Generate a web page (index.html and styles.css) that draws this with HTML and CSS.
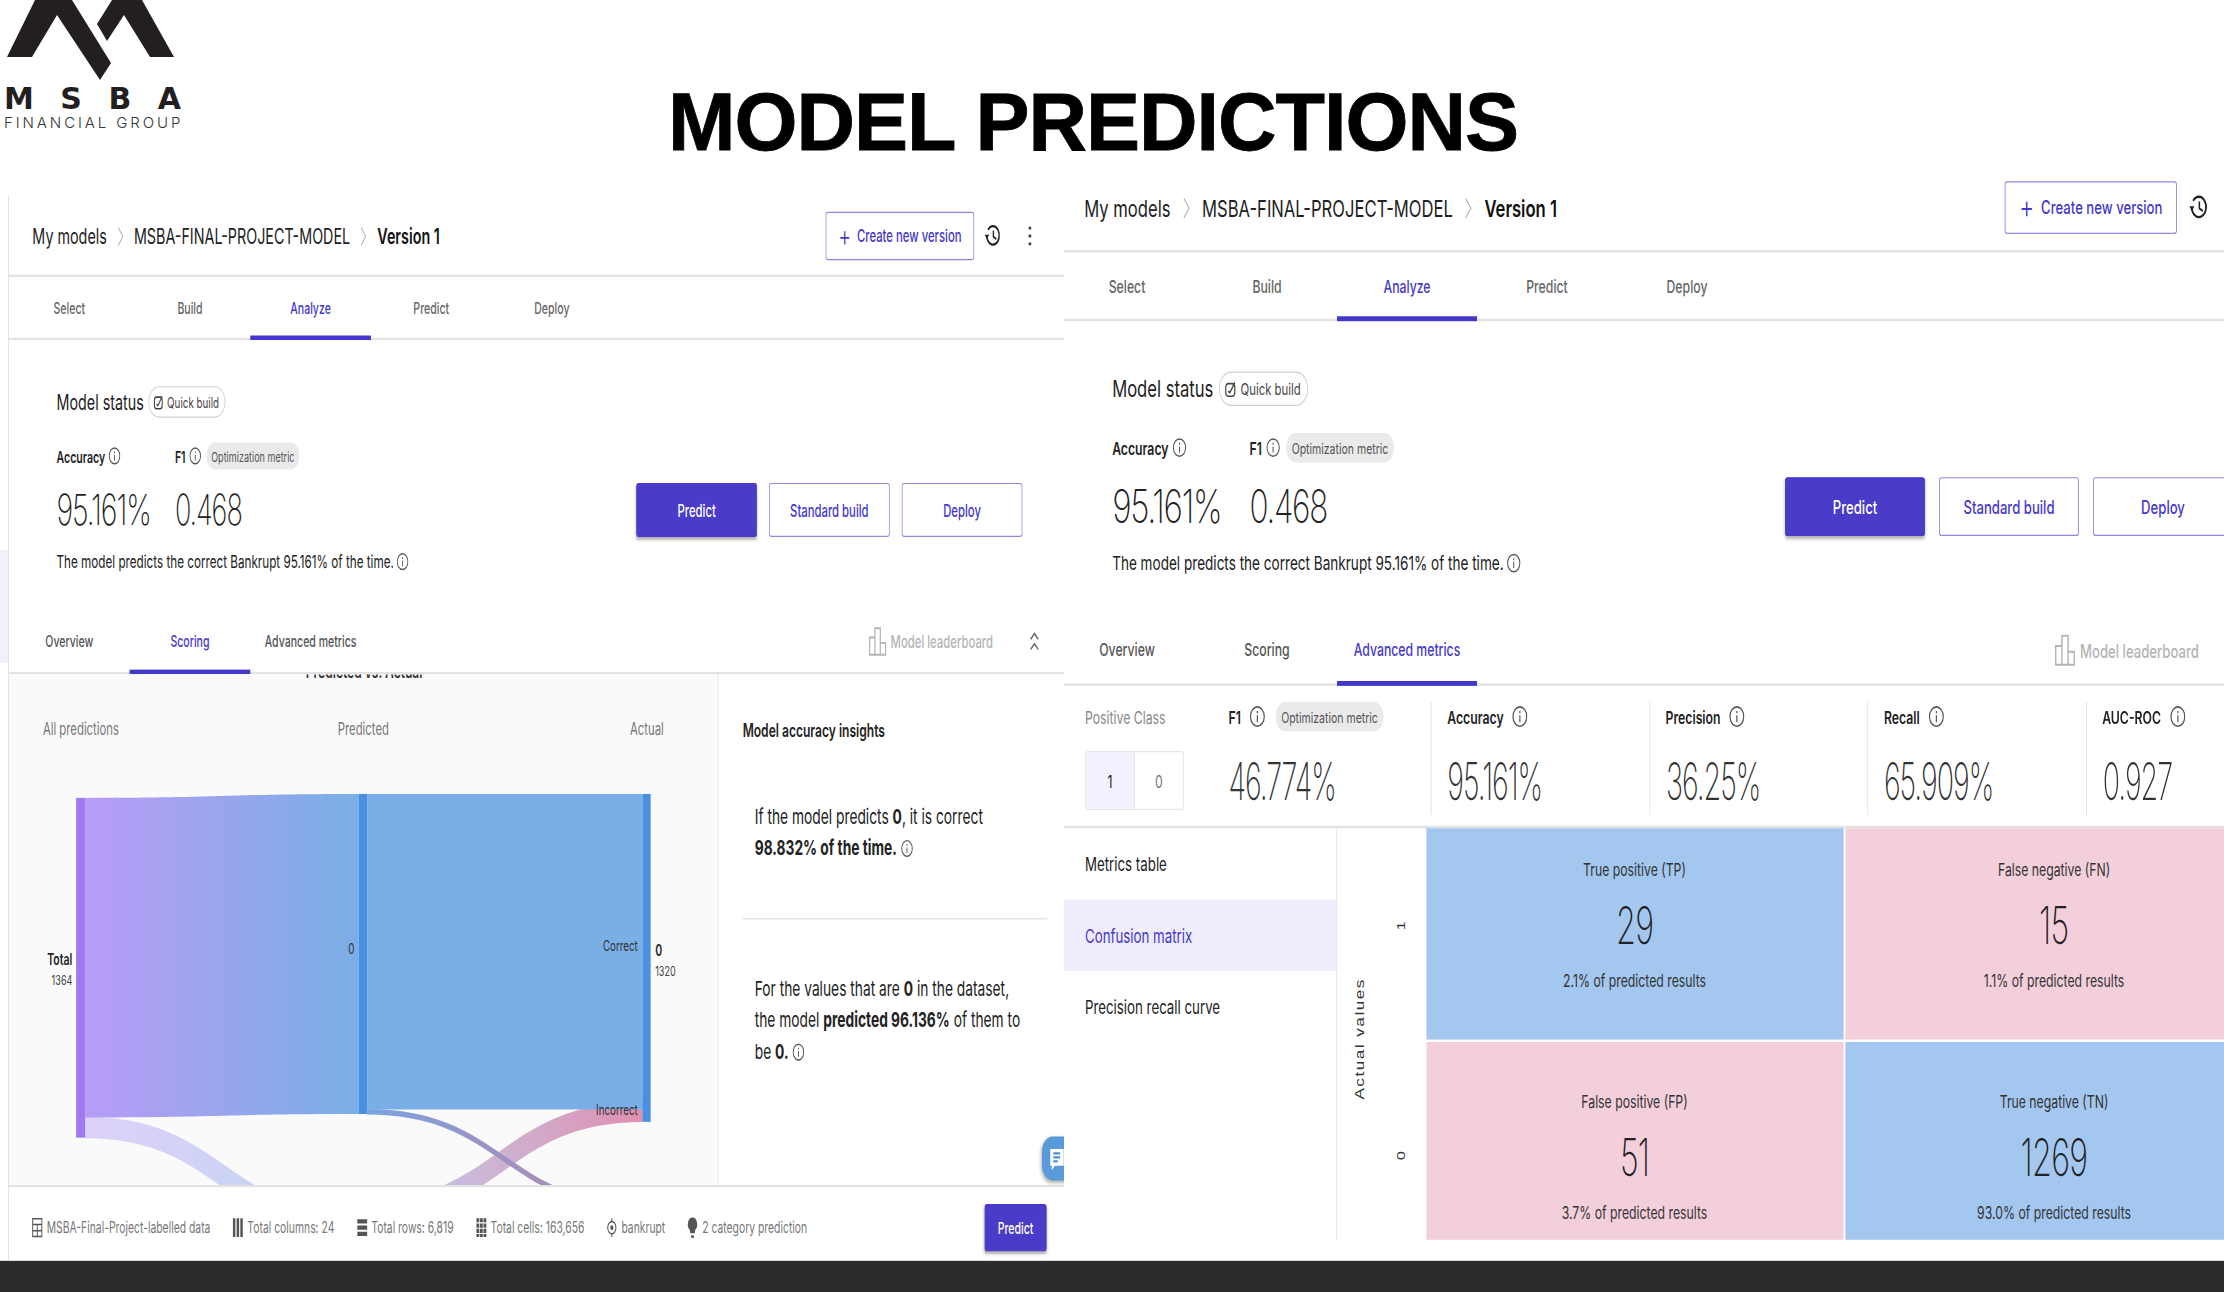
FILE: index.html
```html
<!DOCTYPE html>
<html lang="en">
<head>
<meta charset="utf-8">
<title>Model predictions</title>
<link rel="stylesheet" href="styles.css">
</head>
<body>
<svg class="sprite" aria-hidden="true">
  <symbol id="i-info" viewBox="0 0 16 16"><circle cx="8" cy="8" r="7" fill="none" stroke="currentColor" stroke-width="1.2"/><path d="M8 7v5M8 4v1.6" fill="none" stroke="currentColor" stroke-width="1.2"/></symbol>
  <symbol id="i-history" viewBox="0 0 20 20"><path d="M4 5.500A7.500 7.500 0 1 1 2.600 11" fill="none" stroke="currentColor" stroke-width="1.8"/><path d="M0 9.500h5.400L2.700 13z" fill="currentColor"/><path d="M10.500 6v5l3.500 2" fill="none" stroke="currentColor" stroke-width="1.6"/></symbol>
  <symbol id="i-quick" viewBox="0 0 16 16"><rect x="2" y="3" width="11" height="11" rx="3" fill="none" stroke="currentColor" stroke-width="1.5"/><path d="M5 9.500l2 1.500 6-9" fill="none" stroke="currentColor" stroke-width="1.5"/></symbol>
  <symbol id="i-board" viewBox="0 0 20 22"><path d="M1 8h6v13H1zM7 1h6v20H7zM13 12h6v9h-6z" fill="none" stroke="currentColor" stroke-width="1.4"/></symbol>
  <symbol id="i-chevup" viewBox="0 0 16 20"><path d="M3 8l5-5 5 5M3 17l5-5 5 5" fill="none" stroke="currentColor" stroke-width="1.6"/></symbol>
  <symbol id="i-sep" viewBox="0 0 10 20"><path d="M2 2l6 8-6 8" fill="none" stroke="currentColor" stroke-width="1.2"/></symbol>
  <symbol id="i-table" viewBox="0 0 16 20"><path d="M1.500 1.500h13v17h-13zM1.500 7h13M1.500 13h13M8 7v11.500" fill="none" stroke="currentColor" stroke-width="1.4"/></symbol>
  <symbol id="i-cols" viewBox="0 0 16 20"><path d="M1 1h3.500v18H1zM6.300 1h3.500v18H6.300zM11.500 1H15v18h-3.500z" fill="currentColor"/></symbol>
  <symbol id="i-rows" viewBox="0 0 16 20"><path d="M1 2h14v4H1zM1 8h14v4H1zM1 14h14v4H1z" fill="currentColor"/></symbol>
  <symbol id="i-cells" viewBox="0 0 16 20"><path d="M1 1h4v4H1zM6 1h4v4H6zM11 1h4v4h-4zM1 6h4v4H1zM6 6h4v4H6zM11 6h4v4h-4zM1 11h4v4H1zM6 11h4v4H6zM11 11h4v4h-4zM1 16h4v3H1zM6 16h4v3H6zM11 16h4v3h-4z" fill="currentColor"/></symbol>
  <symbol id="i-target" viewBox="0 0 18 20"><circle cx="9" cy="10" r="6.500" fill="none" stroke="currentColor" stroke-width="1.600"/><circle cx="9" cy="10" r="2.500" fill="currentColor"/><path d="M9 0v4M9 16v4" stroke="currentColor" stroke-width="1.600"/></symbol>
  <symbol id="i-bulb" viewBox="0 0 14 20"><path d="M7 1a6 6 0 0 0-3.500 11l.5 3h6l.5-3A6 6 0 0 0 7 1z" fill="currentColor"/><path d="M5 17h4v2H5z" fill="currentColor"/></symbol>
</svg>

<div class="page">
  <header class="top">
    <div class="logo">
      <svg class="logo-mark" viewBox="0 0 184 84" aria-hidden="true">
        <polygon points="7,57 35,0 72,0 111,63 100,80 57,15 32,57"/>
        <polygon points="97,24 112,0 142,0 174,57 150,57 124,15 107,41"/>
      </svg>
      <div class="logo-name">MSBA</div>
      <div class="logo-sub">FINANCIAL GROUP</div>
    </div>
    <h1 class="title">MODEL PREDICTIONS</h1>
  </header>

  <main class="panels">
    <div class="gutter"><div class="gutter-mark"></div></div>

    <section class="panel panel-left">
      <div class="canvas">
        <div class="crumbs">
          <span>My models</span><svg class="sep"><use href="#i-sep"/></svg>
          <span>MSBA-FINAL-PROJECT-MODEL</span><svg class="sep"><use href="#i-sep"/></svg>
          <strong>Version 1</strong>
          <div class="crumb-actions">
            <button class="btn-create"><span class="plus">+</span>Create new version</button>
            <svg class="ic-history"><use href="#i-history"/></svg>
            <div class="dots"><i></i><i></i><i></i></div>
          </div>
        </div>
        <nav class="tabs">
          <a class="tab">Select</a><a class="tab">Build</a><a class="tab active">Analyze</a><a class="tab">Predict</a><a class="tab">Deploy</a>
        </nav>
        <div class="status">
          <div class="status-main">
            <div class="status-head"><span class="status-title">Model status</span><span class="chip-build"><svg class="ic-quick"><use href="#i-quick"/></svg>Quick build</span></div>
            <div class="kpi-row">
              <div class="kpi kpi-acc"><div class="kpi-label">Accuracy <svg class="info"><use href="#i-info"/></svg></div><div class="kpi-val"><span>95.161%</span></div></div>
              <div class="kpi"><div class="kpi-label">F1 <svg class="info"><use href="#i-info"/></svg><span class="chip-opt">Optimization metric</span></div><div class="kpi-val"><span>0.468</span></div></div>
            </div>
            <p class="sentence">The model predicts the correct Bankrupt 95.161% of the time. <svg class="info"><use href="#i-info"/></svg></p>
          </div>
          <div class="status-btns">
            <button class="btn btn-primary">Predict</button><button class="btn">Standard build</button><button class="btn">Deploy</button>
          </div>
        </div>
        <nav class="tabs subtabs">
          <a class="tab">Overview</a><a class="tab active">Scoring</a><a class="tab">Advanced metrics</a>
          <span class="board"><svg class="ic-board"><use href="#i-board"/></svg>Model leaderboard</span>
          <svg class="ic-chev"><use href="#i-chevup"/></svg>
        </nav>
        <div class="scoring">
          <div class="chart">
            <svg class="sankey" viewBox="0 2 940 453.500" width="940" height="453.500" role="img" aria-label="Predicted vs. Actual">
              <defs>
                <linearGradient id="g1" x1="0" x2="1" y1="0" y2="0"><stop offset="0" stop-color="#b89cf6"/><stop offset="1" stop-color="#7aaee6"/></linearGradient>
                <linearGradient id="g3" gradientUnits="userSpaceOnUse" x1="101" x2="464" y1="0" y2="0"><stop offset="0" stop-color="#ddd2f8"/><stop offset="1" stop-color="#bfd4f2"/></linearGradient>
                <linearGradient id="g4" gradientUnits="userSpaceOnUse" x1="475" x2="840" y1="0" y2="0"><stop offset="0" stop-color="#7aa3de"/><stop offset="1" stop-color="#c47fa8"/></linearGradient>
                <linearGradient id="g5" gradientUnits="userSpaceOnUse" x1="464" x2="840" y1="0" y2="0"><stop offset="0" stop-color="#bcd4f2"/><stop offset="1" stop-color="#e08fb0"/></linearGradient>
              </defs>
              <text class="sk-title" x="471" y="5" text-anchor="middle">Predicted vs. Actual</text>
              <text class="sk-col" x="45" y="56">All predictions</text>
              <text class="sk-col" x="470" y="56" text-anchor="middle">Predicted</text>
              <text class="sk-col" x="846" y="56" text-anchor="middle">Actual</text>
              <path d="M101 405C283 405 283 490 464 490" fill="none" stroke="url(#g3)" stroke-width="19"/>
              <path d="M464 480C652 480 652 391 840 391" fill="none" stroke="url(#g5)" stroke-width="18"/>
              <path d="M475 391C657 391 657 475 840 475" fill="none" stroke="url(#g4)" stroke-width="5"/>
              <path d="M101 112C283 112 283 108.500 464 108.500V393C283 393 283 396 101 396z" fill="url(#g1)"/>
              <rect x="475" y="108.500" width="365" height="280.500" fill="#7aaee6"/>
              <rect x="89" y="112" width="12" height="302" fill="#a078f0"/>
              <rect x="464" y="108.500" width="11" height="284.500" fill="#4a90e0"/>
              <rect x="840" y="108.500" width="11" height="291.500" fill="#4a90e0"/>
              <text class="sk-b" x="84" y="261" text-anchor="end">Total</text>
              <text class="sk-s" x="84" y="278" text-anchor="end">1364</text>
              <text class="sk-m" x="458" y="251" text-anchor="end">0</text>
              <text class="sk-m" x="834" y="248" text-anchor="end">Correct</text>
              <text class="sk-m" x="834" y="394" text-anchor="end">Incorrect</text>
              <text class="sk-b" x="857" y="253">0</text>
              <text class="sk-s" x="857" y="270">1320</text>
            </svg>
          </div>
          <aside class="insights">
            <h3 class="ins-title">Model accuracy insights</h3>
            <p class="ins-a">If the model predicts <b>0</b>, it is correct<br><b>98.832% of the time.</b> <svg class="info"><use href="#i-info"/></svg></p>
            <p class="ins-b">For the values that are <b>0</b> in the dataset,<br>the model <b>predicted 96.136%</b> of them to<br>be <b>0.</b> <svg class="info"><use href="#i-info"/></svg></p>
            <div class="chat"><svg viewBox="0 0 20 22" class="ic-chat"><path d="M2 2h18v15H8l-4 4v-4H2z" fill="#fff"/><path d="M6 6h9M6 9.500h9M6 13h6" stroke="#4a90d8" stroke-width="2"/></svg></div>
          </aside>
        </div>
        <footer class="foot">
          <span class="fi"><svg class="fic"><use href="#i-table"/></svg>MSBA-Final-Project-labelled data</span>
          <span class="fi"><svg class="fic"><use href="#i-cols"/></svg>Total columns: 24</span>
          <span class="fi"><svg class="fic"><use href="#i-rows"/></svg>Total rows: 6,819</span>
          <span class="fi"><svg class="fic"><use href="#i-cells"/></svg>Total cells: 163,656</span>
          <span class="fi"><svg class="fic"><use href="#i-target"/></svg>bankrupt</span>
          <span class="fi"><svg class="fic"><use href="#i-bulb"/></svg>2 category prediction</span>
          <button class="btn btn-primary btn-foot">Predict</button>
        </footer>
      </div>
    </section>

    <section class="panel panel-right">
      <div class="canvas">
        <div class="crumbs">
          <span>My models</span><svg class="sep"><use href="#i-sep"/></svg>
          <span>MSBA-FINAL-PROJECT-MODEL</span><svg class="sep"><use href="#i-sep"/></svg>
          <strong>Version 1</strong>
          <div class="crumb-actions">
            <button class="btn-create"><span class="plus">+</span>Create new version</button>
            <svg class="ic-history"><use href="#i-history"/></svg>
            <div class="dots"><i></i><i></i><i></i></div>
          </div>
        </div>
        <nav class="tabs">
          <a class="tab">Select</a><a class="tab">Build</a><a class="tab active">Analyze</a><a class="tab">Predict</a><a class="tab">Deploy</a>
        </nav>
        <div class="status">
          <div class="status-main">
            <div class="status-head"><span class="status-title">Model status</span><span class="chip-build"><svg class="ic-quick"><use href="#i-quick"/></svg>Quick build</span></div>
            <div class="kpi-row">
              <div class="kpi kpi-acc"><div class="kpi-label">Accuracy <svg class="info"><use href="#i-info"/></svg></div><div class="kpi-val"><span>95.161%</span></div></div>
              <div class="kpi"><div class="kpi-label">F1 <svg class="info"><use href="#i-info"/></svg><span class="chip-opt">Optimization metric</span></div><div class="kpi-val"><span>0.468</span></div></div>
            </div>
            <p class="sentence">The model predicts the correct Bankrupt 95.161% of the time. <svg class="info"><use href="#i-info"/></svg></p>
          </div>
          <div class="status-btns">
            <button class="btn btn-primary">Predict</button><button class="btn">Standard build</button><button class="btn">Deploy</button>
          </div>
        </div>
        <nav class="tabs subtabs">
          <a class="tab">Overview</a><a class="tab">Scoring</a><a class="tab active">Advanced metrics</a>
          <span class="board"><svg class="ic-board"><use href="#i-board"/></svg>Model leaderboard</span>
          <svg class="ic-chev"><use href="#i-chevup"/></svg>
        </nav>
        <div class="metrics">
          <div class="pos">
            <div class="pos-label">Positive Class</div>
            <div class="toggle"><span class="tg on">1</span><span class="tg">0</span></div>
          </div>
          <div class="mcol mcol-first"><div class="kpi-label m-label">F1 <svg class="info"><use href="#i-info"/></svg><span class="chip-opt">Optimization metric</span></div><div class="m-val"><span>46.774%</span></div></div>
          <div class="mcol"><div class="kpi-label m-label">Accuracy <svg class="info"><use href="#i-info"/></svg></div><div class="m-val"><span>95.161%</span></div></div>
          <div class="mcol"><div class="kpi-label m-label">Precision <svg class="info"><use href="#i-info"/></svg></div><div class="m-val"><span>36.25%</span></div></div>
          <div class="mcol"><div class="kpi-label m-label">Recall <svg class="info"><use href="#i-info"/></svg></div><div class="m-val"><span>65.909%</span></div></div>
          <div class="mcol"><div class="kpi-label m-label">AUC-ROC <svg class="info"><use href="#i-info"/></svg></div><div class="m-val"><span>0.927</span></div></div>
        </div>
        <div class="detail">
          <ul class="menu">
            <li>Metrics table</li>
            <li class="on">Confusion matrix</li>
            <li>Precision recall curve</li>
          </ul>
          <div class="axis">
            <div class="axis-title">Actual values</div>
            <div class="ticks"><span>1</span><span>0</span></div>
          </div>
          <div class="matrix">
            <div class="matrix-grid">
              <div class="cell blue"><div class="c-l">True positive (TP)</div><div class="c-n"><span>29</span></div><div class="c-l">2.1% of predicted results</div></div>
              <div class="cell pink"><div class="c-l">False negative (FN)</div><div class="c-n"><span>15</span></div><div class="c-l">1.1% of predicted results</div></div>
              <div class="cell pink"><div class="c-l">False positive (FP)</div><div class="c-n"><span>51</span></div><div class="c-l">3.7% of predicted results</div></div>
              <div class="cell blue"><div class="c-l">True negative (TN)</div><div class="c-n"><span>1269</span></div><div class="c-l">93.0% of predicted results</div></div>
            </div>
          </div>
        </div>
      </div>
    </section>
  </main>
  <div class="bar"></div>
</div>
</body>
</html>
```

FILE: styles.css
```css
* { box-sizing: border-box; }
html, body { margin: 0; padding: 0; background: #fff; }
body { font-family: Inter, "Liberation Sans", sans-serif; color: #1f1f1f; overflow: hidden; }
.sprite { position: absolute; width: 0; height: 0; overflow: hidden; }

.page { width: 2224px; height: 1292px; display: flex; flex-direction: column; overflow: hidden; }

/* top banner */
.top { height: 162px; flex: none; display: flex; }
.logo { width: 190px; margin-left: 4px; flex: none; color: #231f20; }
.logo-mark { display: block; width: 184px; height: 84px; margin-left: -4px; fill: #231f20; }
.logo-name { font-family: "DejaVu Sans", sans-serif; font-weight: 700; font-size: 30px; line-height: 26px; letter-spacing: 26.500px; margin-top: 2px; white-space: nowrap; }
.logo-sub { font-weight: 300; font-size: 15px; line-height: 16px; letter-spacing: 2.900px; margin-top: 3px; white-space: nowrap; color: #333; }
.title { margin: 76px 0 0 474px; font-family: "Liberation Sans", Arial, sans-serif; font-weight: 700; font-size: 81px; line-height: 93px; letter-spacing: -1px; color: #000; white-space: nowrap; -webkit-text-stroke: .8px #000; }

/* panels: the same 1400px wide page, squeezed by different factors */
.panels { flex: 1; min-height: 0; display: flex; }
.gutter { width: 8px; flex: none; padding-top: 388px; }
.gutter-mark { height: 113px; background: #f1f0fb; }
.panel { overflow: hidden; flex: none; }
.canvas { width: 1400px; transform-origin: 0 0; background: #fff; }
.panel-left { width: 1056px; margin-top: 33.500px; border-left: 1px solid #e2e2e2; }
.panel-left .canvas { transform: scale(.754, 1.125); height: 947px; }
.panel-right { width: 1160px; margin-top: 1.500px; }
.panel-right .canvas { margin-left: -7px; transform: scale(.875, 1.228); height: 892px; }

/* breadcrumb row */
.crumbs { height: 72px; display: flex; align-items: center; padding: 2px 32px 0 31px; border-bottom: 2px solid #e2e2e2; font-size: 19px; white-space: nowrap; color: #222; }
.crumbs strong { font-weight: 600; color: #111; }
.sep { width: 10px; height: 20px; margin: 0 13px; color: #b5b5b5; }
.crumb-actions { margin-left: auto; margin-top: -2px; display: flex; align-items: center; }
.btn-create { width: 197px; height: 43px; margin-right: 14px; display: flex; align-items: center; justify-content: center; gap: 8px; background: #fff; border: 1px solid #8f88e2; border-radius: 3px; color: #4438ca; font: 500 15px Inter, sans-serif; white-space: nowrap; }
.plus { font-size: 26px; font-weight: 300; line-height: 20px; }
.ic-history { width: 22px; height: 22px; color: #222; }
.dots { width: 4px; margin: 0 12px 0 36px; display: flex; flex-direction: column; gap: 4px; }
.dots i { display: block; width: 4px; height: 3px; border-radius: 50%; background: #444; }

/* tabs */
.tabs { height: 56px; display: flex; align-items: stretch; border-bottom: 2px solid #e2e2e2; }
.tab { width: 160px; flex: none; display: flex; align-items: center; justify-content: center; padding-top: 2px; font-size: 14px; font-weight: 500; color: #666; margin-bottom: -2px; border-bottom: 4px solid transparent; }
.tab.active { color: #4438ca; border-bottom-color: #4438ca; }

/* status block */
.status { height: 241px; display: flex; justify-content: space-between; padding: 41px 56px 0 63px; }
.status-head { height: 28px; display: flex; align-items: center; gap: 6px; }
.status-title { font-size: 19px; font-weight: 400; color: #222; white-space: nowrap; }
.chip-build { height: 28px; padding: 0 7px 0 5px; display: inline-flex; align-items: center; gap: 4px; border: 1px solid #cfcfcf; border-radius: 14px; font-size: 13px; color: #444; white-space: nowrap; }
.ic-quick { width: 15px; height: 15px; }
.kpi-row { display: flex; margin-top: 22px; }
.kpi-acc { width: 157px; }
.kpi-label { height: 24px; display: flex; align-items: center; gap: 5px; font-size: 14px; font-weight: 600; color: #222; white-space: nowrap; }
.info { width: 16px; height: 16px; flex: none; color: #555; }
.chip-opt { height: 24px; padding: 0 6px; margin-left: 2px; display: inline-flex; align-items: center; background: #eaeaea; border-radius: 11px; font-size: 12px; font-weight: 400; color: #555; }
.kpi-val { margin-top: 12px; font-size: 38px; line-height: 46px; font-weight: 200; letter-spacing: -1.500px; color: #222; white-space: nowrap; }
.kpi-val span { display: inline-block; transform: scaleX(.95); transform-origin: 0 50%; }
.kpi-acc .kpi-val span { transform: none; }
.sentence { margin: 14px 0 0; display: flex; align-items: center; gap: 4px; height: 20px; font-size: 15.500px; color: #222; white-space: nowrap; }
.status-btns { display: flex; gap: 16px; margin-top: 86px; align-self: flex-start; }
.btn { width: 160px; height: 48px; background: #fff; border: 1px solid #8f88e2; border-radius: 3px; color: #4438ca; font: 500 15px Inter, sans-serif; white-space: nowrap; padding: 0; }
.btn-primary { background: #4a3bc9; border-color: #4a3bc9; color: #fff; box-shadow: 0 2px 3px rgba(0,0,0,.3); }

/* sub tabs */
.subtabs .tab { color: #555; padding-top: 0; }
.subtabs .tab.active { color: #4438ca; }
.board { margin-left: auto; display: flex; align-items: center; gap: 5px; font-size: 15px; font-weight: 500; color: #b4b4b4; white-space: nowrap; }
.ic-board { width: 24px; height: 26px; }
.ic-chev { width: 16px; height: 20px; margin: 17px 32px 0 47px; color: #666; }

/* scoring */
.scoring { height: 453.500px; display: flex; }
.chart { width: 940px; flex: none; background: #fafafa; overflow: hidden; }
.sankey { display: block; }
.sk-title { font: 600 16px Inter, sans-serif; fill: #333; }
.sk-col { font: 400 15px Inter, sans-serif; fill: #777; }
.sk-b { font: 600 14px Inter, sans-serif; fill: #222; }
.sk-s { font: 400 12px Inter, sans-serif; fill: #444; }
.sk-m { font: 400 13px Inter, sans-serif; fill: #333; }
.insights { flex: 1; position: relative; padding: 0 23px 0 32px; border-left: 1px solid #e2e2e2; overflow: hidden; }
.ins-title { margin: 39px 0 0; font-size: 16px; line-height: 22px; font-weight: 600; color: #222; white-space: nowrap; }
.ins-a, .ins-b { margin: 0; padding-left: 16px; font-size: 18.300px; line-height: 28px; color: #222; white-space: nowrap; }
.ins-a { padding-top: 50.500px; padding-bottom: 49.500px; border-bottom: 1px solid #ddd; }
.ins-a .info, .ins-b .info { vertical-align: -2px; }
.ins-b { padding-top: 47px; }
.ins-a b, .ins-b b { font-weight: 700; }
.chat { position: absolute; right: -6px; top: 411px; width: 36px; height: 39px; border-radius: 14px 0 0 14px; background: #5a9ad8; box-shadow: 0 2px 4px rgba(0,0,0,.3); display: flex; align-items: center; padding-left: 9px; }
.ic-chat { width: 20px; height: 22px; }

/* footer */
.foot { height: 90px; display: flex; align-items: flex-start; padding: 15.500px 24px 0 30px; gap: 29px; border-top: 2px solid #e2e2e2; }
.fi { height: 42px; display: flex; align-items: center; gap: 5px; font-size: 13.750px; color: #777; white-space: nowrap; }
.fic { width: 15px; height: 20px; color: #555; }
.btn-foot { width: 82px; height: 42px; margin-left: auto; font-size: 14px; }

/* right metrics */
.metrics { height: 116px; display: flex; border-bottom: 2px solid #e2e2e2; padding: 13px 0 0 32px; }
.pos { width: 145px; flex: none; }
.pos-label { height: 24px; display: flex; align-items: center; font-size: 14px; color: #888; white-space: nowrap; }
.toggle { display: flex; width: 113px; height: 48px; margin-top: 16px; border: 1px solid #e6e6e6; border-radius: 3px; }
.tg { flex: 1; display: flex; align-items: center; justify-content: center; font-size: 14px; color: #777; }
.tg.on { background: #f3f1fd; color: #222; border-right: 1px solid #e0e0f0; }
.mcol { width: 249.500px; height: 92px; flex: none; padding-left: 18px; border-left: 1px solid #e2e2e2; }
.mcol-first { width: 250px; border-left: 0; padding-left: 19px; }
.m-label { height: 24px; gap: 10px; }
.m-label .info { width: 18px; height: 18px; }
.m-val { margin-top: 17px; font-size: 42px; line-height: 48px; font-weight: 200; letter-spacing: -1.500px; color: #333; white-space: nowrap; }
.m-val span { display: inline-block; transform: scaleX(.78); transform-origin: 0 50%; }

/* confusion matrix */
.detail { height: 335px; display: flex; }
.menu { width: 320px; flex: none; margin: 0; padding: 0; list-style: none; border-right: 1px solid #e2e2e2; }
.menu li { height: 58px; display: flex; align-items: center; padding-left: 32px; font-size: 15.200px; color: #222; }
.menu li.on { background: #efecfc; color: #4438ca; }
.axis { width: 101.500px; flex: none; display: flex; overflow: hidden; }
.axis-title { writing-mode: vertical-rl; transform: rotate(180deg); align-self: center; margin: 7px 0 0 18px; font: 400 14px "Liberation Sans", sans-serif; letter-spacing: 1.200px; color: #333; white-space: nowrap; }
.ticks { margin: -14px 0 0 32px; display: flex; flex-direction: column; }
.ticks span { height: 187px; flex: none; display: flex; justify-content: center; writing-mode: vertical-rl; transform: rotate(180deg); font: 400 13px "Liberation Sans", sans-serif; color: #333; }
.matrix { flex: 1; overflow: hidden; }
.matrix-grid { margin-top: -14px; display: grid; grid-template-columns: 477px 478px; grid-template-rows: 186px 188px; gap: 2px; }
.cell { display: flex; flex-direction: column; align-items: center; justify-content: center; gap: 10px; }
.blue { background: #a3c7ef; }
.pink { background: #f3cfdc; }
.c-l { font-size: 14px; line-height: 20px; color: #333; white-space: nowrap; }
.c-n { font-size: 42px; line-height: 50px; font-weight: 200; letter-spacing: -1px; color: #222; }
.c-n span { display: inline-block; transform: scaleX(.88); }

/* bottom bar */
.bar { height: 32px; flex: none; background: #2c2c2c; border-top: 1px solid #dcdcdc; }
```
